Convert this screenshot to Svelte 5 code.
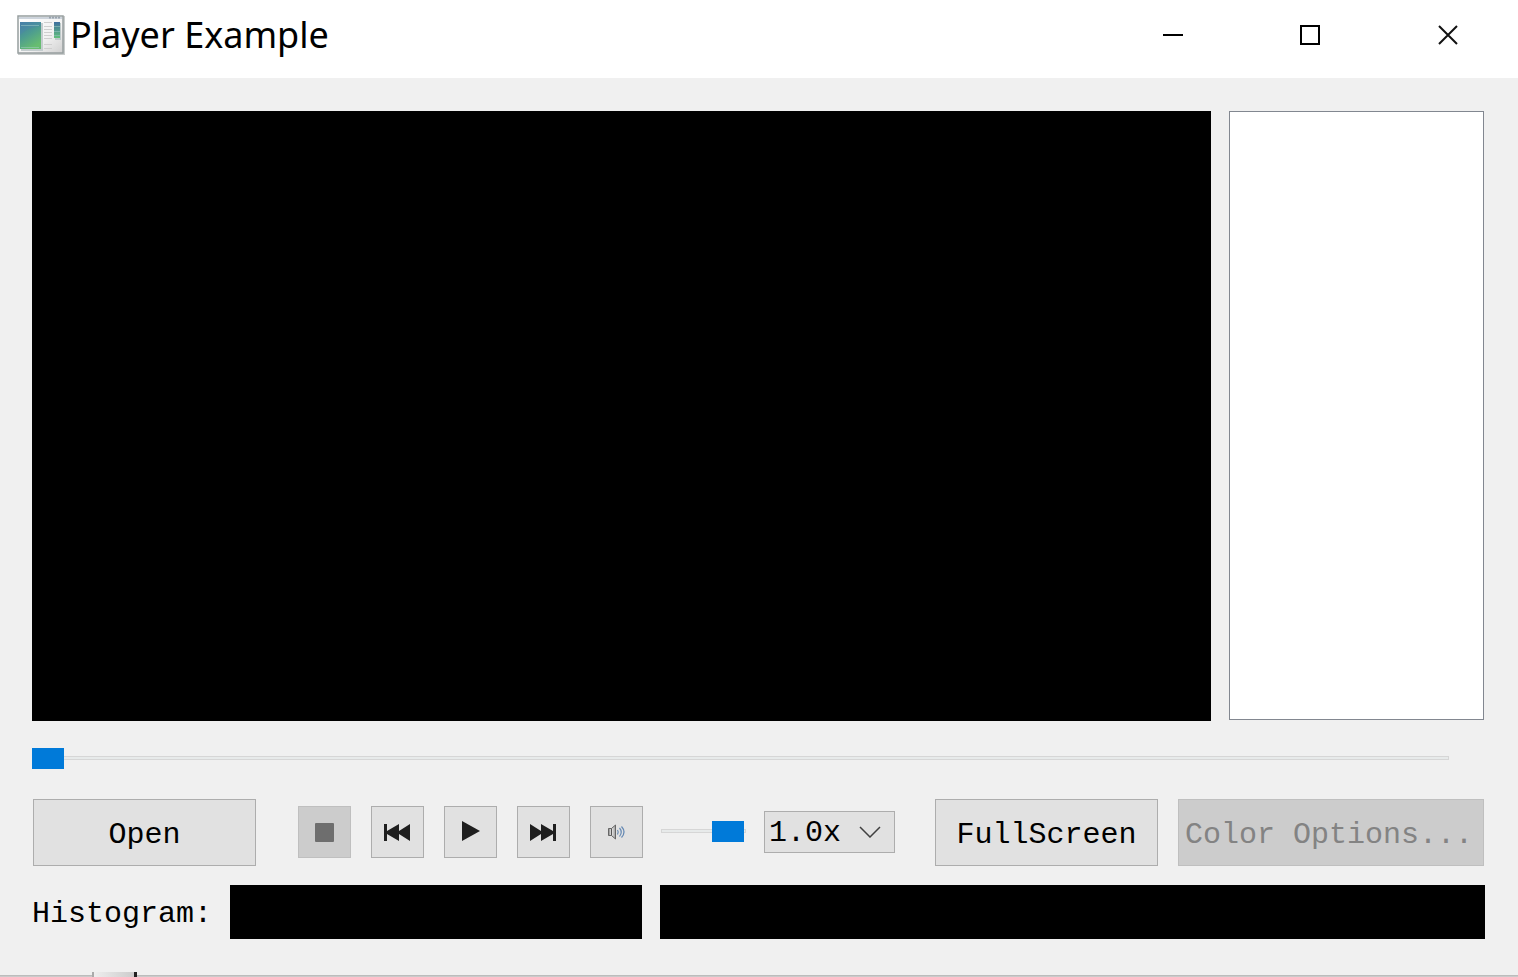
<script>
  let position = $state(0);
  let volume = $state(96);
  let rate = $state('1.0x');
</script>

<div class="window">
  <header class="titlebar">
    <svg class="app-icon" width="48" height="42" viewBox="0 0 48 42" aria-hidden="true">
      <defs>
        <linearGradient id="pane" x1="0" y1="0" x2="0.5" y2="1">
          <stop offset="0" stop-color="#4579a5" />
          <stop offset="0.5" stop-color="#4c9b91" />
          <stop offset="1" stop-color="#67bd70" />
        </linearGradient>
        <linearGradient id="paper" x1="0" y1="0" x2="1" y2="1">
          <stop offset="0" stop-color="#ffffff" />
          <stop offset="0.6" stop-color="#f2f2f2" />
          <stop offset="1" stop-color="#d0d0d0" />
        </linearGradient>
        <linearGradient id="strip" x1="0" y1="0" x2="0" y2="1">
          <stop offset="0" stop-color="#3f6f9f" />
          <stop offset="1" stop-color="#62bf7b" />
        </linearGradient>
      </defs>
      <rect x="1" y="2" width="47" height="39" fill="#c9cccc" />
      <rect x="1" y="2" width="45" height="37" fill="url(#paper)" stroke="#979e9f" stroke-width="1.500" />
      <path d="M2 3h43v2H2z" fill="#cdd4dc" />
      <path d="M32 3.500h12" stroke="#9aa4ae" stroke-width="2" stroke-dasharray="2 1" />
      <rect x="4" y="9" width="22" height="28" fill="#c5cdcf" />
      <rect x="3" y="8" width="21" height="27" fill="url(#pane)" />
      <path d="M3 21Q10 13 24 12V8H3z" fill="#4a86ad" opacity="0.4" />
      <path d="M4 11.500h18M4 33.500h18" stroke="#a3cfc9" opacity="0.5" />
      <path d="M27 8.500h8M27 12.500h8M27 15.500h8M27 18.500h8M27 21.500h8M27 24.500h8M27 30.500h8M27 34.500h8" stroke="#cfcfcf" />
      <rect x="38" y="9" width="6" height="17" fill="#bdc9c9" />
      <rect x="37" y="8" width="6" height="16" fill="url(#strip)" />
      <path d="M37 12.500h6M37 17.500h6M37 21.500h6" stroke="#8bbcb7" opacity="0.7" />
    </svg>
    <h1>Player Example</h1>
    <div class="window-controls">
      <button type="button" aria-label="Minimize">
        <svg width="22" height="22" viewBox="0 0 22 22"><path d="M2 11h20" stroke="#000" stroke-width="2" /></svg>
      </button>
      <button type="button" aria-label="Maximize">
        <svg width="22" height="22" viewBox="0 0 22 22"><path d="M2 2h18v18H2z" fill="none" stroke="#000" stroke-width="2" /></svg>
      </button>
      <button type="button" aria-label="Close">
        <svg width="22" height="22" viewBox="0 0 22 22"><path d="M2 2l18 18M20 2L2 20" stroke="#111" stroke-width="2" /></svg>
      </button>
    </div>
  </header>

  <main>
    <section class="display">
      <div class="video"></div>
      <div class="playlist" role="listbox" aria-label="Playlist" tabindex="0"></div>
    </section>

    <input class="slider seek" type="range" min="0" max="100" bind:value={position} aria-label="Position" />

    <section class="controls">
      <button type="button" class="push">Open</button>

      <div class="transport">
        <button type="button" class="tool" aria-label="Stop" disabled>
          <svg width="32" height="32" viewBox="0 0 32 32"><rect x="7" y="7" width="19" height="19" rx="1" fill="#6e6e6e" /></svg>
        </button>
        <button type="button" class="tool" aria-label="Previous">
          <svg width="32" height="32" viewBox="0 0 32 32"><path d="M3 8h3v7L18 8v7L29 8v17L18 18v7L6 18v7H3z" fill="#1f1f1f" /></svg>
        </button>
        <button type="button" class="tool" aria-label="Play">
          <svg width="32" height="32" viewBox="0 0 32 32"><path d="M8 5L26 15L8 25z" fill="#1f1f1f" /></svg>
        </button>
        <button type="button" class="tool" aria-label="Next">
          <svg width="32" height="32" viewBox="0 0 32 32"><path d="M29 8h-3v7L14 8v7L3 8v17l11-7v7l12-7v7h3z" fill="#1f1f1f" /></svg>
        </button>
        <button type="button" class="tool" aria-label="Mute">
          <svg width="32" height="32" viewBox="0 0 32 32">
            <defs>
              <linearGradient id="cone" x1="0" y1="0" x2="1" y2="0">
                <stop offset="0" stop-color="#777" />
                <stop offset="0.4" stop-color="#f4f4f4" />
                <stop offset="1" stop-color="#999" />
              </linearGradient>
            </defs>
            <path d="M8.500 12.500h3l4-3.500v14l-4-3.500h-3z" fill="url(#cone)" stroke="#666" />
            <path d="M11.500 12.500v7" stroke="#555" />
            <path d="M17.500 14q1.500 2 0 4.500M19.500 12q3.500 4 0 8.500M21.500 10.500q5 5.500 0 11" fill="none" stroke="#6488b3" stroke-width="1.200" />
          </svg>
        </button>
      </div>

      <input class="slider volume" type="range" min="0" max="100" bind:value={volume} aria-label="Volume" />

      <div class="rate">
        <select bind:value={rate} aria-label="Playback rate">
          <option>0.5x</option>
          <option>1.0x</option>
          <option>2.0x</option>
        </select>
        <svg width="22" height="12" viewBox="0 0 22 12" aria-hidden="true"><path d="M1 1l10 10L21 1" fill="none" stroke="#404040" stroke-width="1.500" /></svg>
      </div>

      <button type="button" class="push fullscreen">FullScreen</button>
      <button type="button" class="push options" disabled>Color Options...</button>
    </section>

    <section class="histogram">
      <span>Histogram:</span>
      <div class="levels"></div>
      <div class="levels wide"></div>
    </section>
  </main>

  <footer><div class="fragment"></div></footer>
</div>

<style>
  :global(body) {
    margin: 0;
  }

  .window {
    display: flex;
    flex-direction: column;
    min-height: 100vh;
    background: #f0f0f0;
    color: #000;
    font: 30px/36px 'Liberation Mono', monospace;
  }

  .window *,
  .window {
    box-sizing: border-box;
  }

  button,
  select {
    margin: 0;
    padding: 0;
    border-radius: 0;
    color: inherit;
    font: inherit;
  }

  svg {
    display: block;
    flex: none;
  }

  .titlebar {
    display: flex;
    height: 78px;
    padding-left: 17px;
    background: #fff;
  }

  .app-icon {
    margin: 14px 5px 0 0;
  }

  h1 {
    flex: 1;
    margin: 0;
    font: 400 36px/70px 'Noto Sans', sans-serif;
    white-space: nowrap;
  }

  .window-controls {
    display: flex;
    height: 70px;
    padding-right: 1px;
  }

  .window-controls button {
    display: flex;
    align-items: center;
    justify-content: center;
    width: 138px;
    border: 0;
    background: none;
  }

  main {
    display: flex;
    flex: 1;
    flex-direction: column;
    padding: 33px 33px 33px 32px;
  }

  .display {
    display: flex;
    flex: 1;
    gap: 18px;
    min-height: 240px;
  }

  .video {
    flex: 1;
    background: #000;
  }

  .playlist {
    width: 255px;
    margin: 0 1px 1px 0;
    border: 1px solid #828790;
    background: #fff;
    outline: none;
  }

  .slider {
    appearance: none;
    display: block;
    height: 21px;
    margin: 0;
    background: none;
  }

  .slider::-webkit-slider-runnable-track {
    height: 21px;
    background:
      linear-gradient(#d6d6d6, #d6d6d6) 100% 8px / 1px 4px no-repeat,
      linear-gradient(#d6d6d6, #d6d6d6) 0 8px / 1px 4px no-repeat,
      linear-gradient(#d6d6d6 1px, #e7eaea 1px 3px, #d6d6d6 3px) 0 8px / 100% 4px no-repeat;
  }

  .slider::-webkit-slider-thumb {
    appearance: none;
    width: 32px;
    height: 21px;
    border: 0;
    border-radius: 0;
    background: #007ad9;
  }

  .seek {
    margin: 27px 36px 30px 0;
  }

  .controls {
    display: flex;
    align-items: center;
    padding: 0 1px;
  }

  .push {
    width: 223px;
    height: 67px;
    padding-top: 4px;
    border: 1px solid #adadad;
    background: #e1e1e1;
    white-space: nowrap;
  }

  .transport {
    display: flex;
    gap: 20px;
    margin: 0 18px 1px 42px;
  }

  .tool {
    display: flex;
    align-items: center;
    width: 53px;
    height: 52px;
    padding-left: 9px;
    border: 1px solid #adadad;
    background: #e1e1e1;
  }

  button:disabled {
    border-color: #bfbfbf;
    background: #ccc;
    color: #838383;
  }

  .volume {
    width: 85px;
    margin-bottom: 2px;
  }

  .rate {
    position: relative;
    width: 131px;
    margin: 0 auto 1px 18px;
  }

  select {
    appearance: none;
    display: block;
    width: 100%;
    height: 42px;
    padding: 2px 0 0 4px;
    border: 1px solid #adadad;
    background: #e1e1e1;
  }

  .rate svg {
    position: absolute;
    top: 15px;
    right: 14px;
    pointer-events: none;
  }

  .fullscreen {
    margin: 0 20px 0 18px;
  }

  .options {
    width: 306px;
    padding-right: 4px;
  }

  .histogram {
    display: flex;
    gap: 18px;
    height: 54px;
    margin-top: 19px;
    line-height: 58px;
  }

  .levels {
    flex: 1;
    background: #000;
  }

  .wide {
    flex: 2;
  }

  footer {
    height: 5px;
    padding-left: 92px;
    background: linear-gradient(transparent 3px, #bcbcbc 3px 4px, #cacaca 4px);
  }

  .fragment {
    width: 45px;
    height: 5px;
    border: solid #aaa;
    border-width: 0 3px 0 2px;
    border-right-color: #222;
    background: linear-gradient(90deg, #eee, #ccc);
  }
</style>
